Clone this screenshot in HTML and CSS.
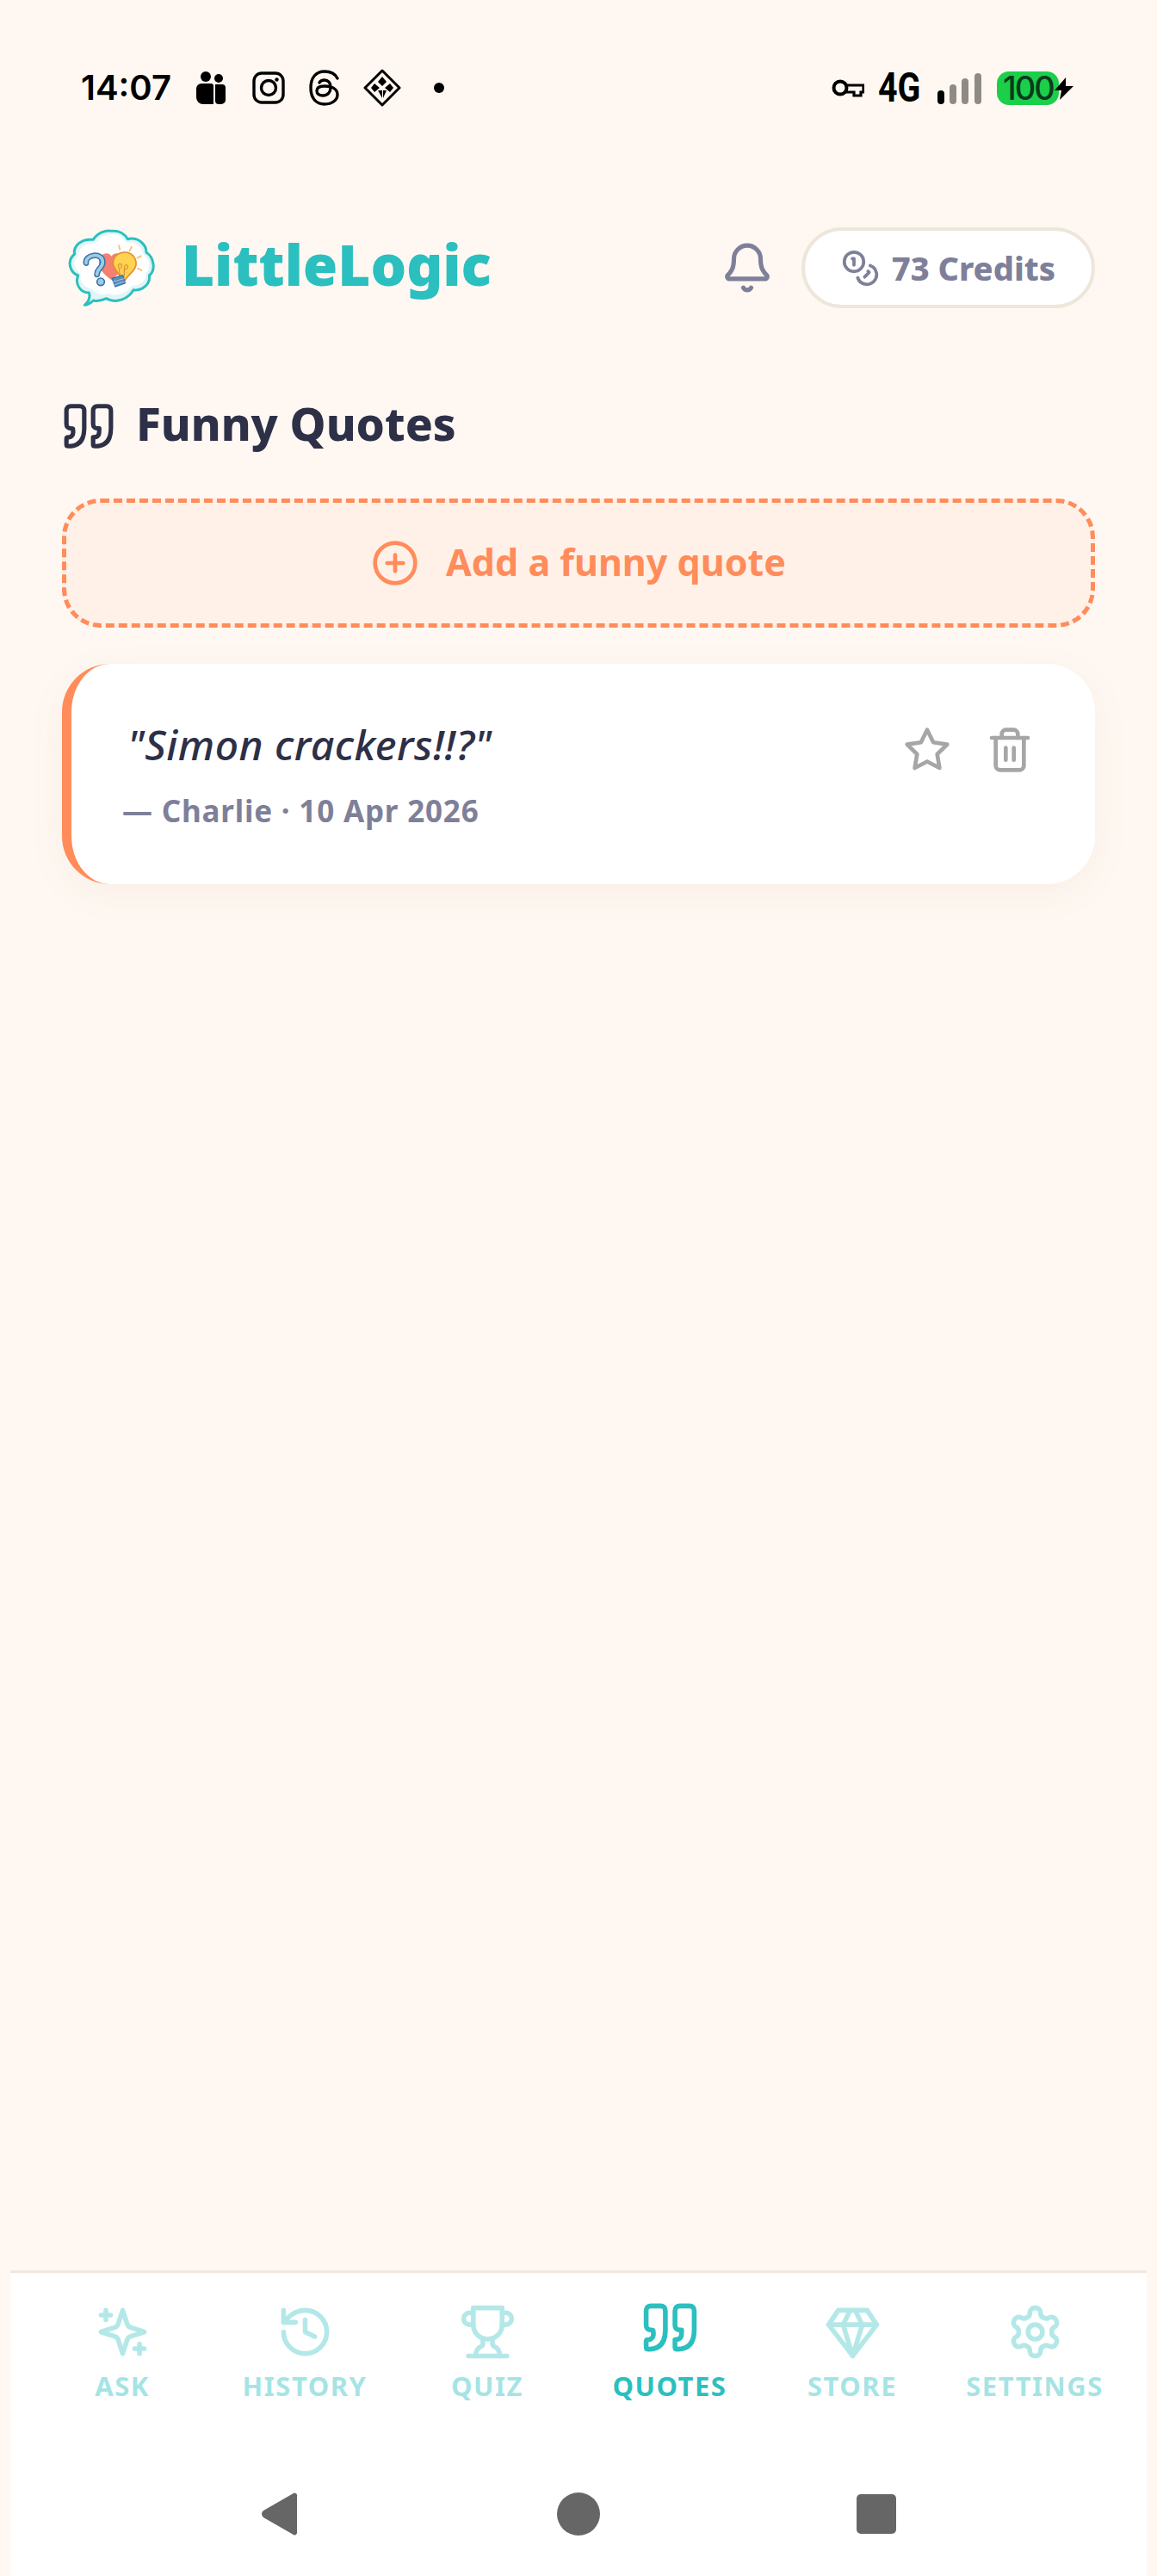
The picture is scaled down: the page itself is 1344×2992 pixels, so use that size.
FILE: index.html
```html
<!DOCTYPE html>
<html lang="en">
<head>
<meta charset="utf-8">
<title>LittleLogic</title>
<link rel="stylesheet" href="styles.css">
</head>
<body>
<div class="screen">
  <header class="status">
    <div class="status-left">
      <span class="time">14:07</span>
      <svg class="si si-people" viewBox="0 0 34 38"><circle cx="11" cy="6" r="6"/><circle cx="26" cy="8" r="5"/><path d="M6 14h11a3 3 0 0 1 3 3v21H8a8 8 0 0 1-8-8V20a6 6 0 0 1 6-6z"/><path d="M22 15h8a4 4 0 0 1 4 4v14a5 5 0 0 1-5 5h-3a4 4 0 0 1-4-4z"/></svg>
      <svg class="si si-insta" viewBox="0 0 38 38"><rect x="2" y="2" width="34" height="34" rx="9" fill="none" stroke="#000" stroke-width="3.4"/><circle cx="19" cy="19" r="8.5" fill="none" stroke="#000" stroke-width="3.4"/><circle cx="28.5" cy="9.5" r="2.2"/></svg>
      <svg class="si si-threads" viewBox="0 0 36 42"><path d="M33 10C30 4 25 2 18 2 8 2 2 9 2 21s6 19 16 19c9 0 15-5 15-11 0-7-7-10-15-10-6 0-9 2-9 5.500S12 30 16 30c6 0 9-4 9-10 0-5-3-8-7-8-3 0-5 1-6 3" fill="none" stroke="#000" stroke-width="3.400" stroke-linecap="round"/></svg>
      <svg class="si si-diamond" viewBox="0 0 44 44"><path d="M22 2 42 22 22 42 2 22Z" fill="none" stroke="#000" stroke-width="3" stroke-linejoin="round"/><path d="M22 9l5 6-5 5-5-5zM13 17l6 5-6 5-4-5zM31 17l4 5-4 5-6-5zM17 25h5v9zM27 25h-4v9z"/></svg>
      <span class="dot"></span>
    </div>
    <div class="status-right">
      <svg class="si si-key" viewBox="0 0 38 22"><circle cx="10" cy="11" r="7.500" fill="none" stroke="#000" stroke-width="4"/><path d="M17 8h20v8h-3v4h-8v-4h-9" fill="none" stroke="#000" stroke-width="3.200"/></svg>
      <span class="net">4G</span>
      <svg class="si si-signal" viewBox="0 0 52 36"><rect x="0" y="20" width="8" height="16" rx="4"/><rect class="bar-off" x="14" y="13" width="8" height="23" rx="4"/><rect class="bar-off" x="28" y="6" width="8" height="30" rx="4"/><rect class="bar-off" x="43" y="0" width="8" height="36" rx="4"/></svg>
      <span class="battery"><span class="battery-num">100</span><svg class="bolt" viewBox="0 0 26 28"><path d="M15 1 2 16h8l-2 11 16-16h-9z"/></svg></span>
    </div>
  </header>

  <main class="main">
    <div class="topbar">
      <div class="brand">
        <svg class="logo" viewBox="0 0 108 94">
          <g transform="translate(-2 -9) scale(.3333)">
            <path d="M85 298C100 285 105 270 100 255 70 255 50 225 62 195 35 185 20 145 50 120 45 95 70 65 115 70 130 45 160 35 180 40 205 38 225 50 235 68 270 60 300 85 300 115 325 130 335 175 310 195 315 225 285 250 255 245 240 275 195 295 160 275 140 285 125 285 115 282 105 292 95 298 85 298Z" fill="#E2F5F6" stroke="#2BBFBF" stroke-width="9" stroke-linejoin="round"/>
            <path d="M106 240C78 235 66 215 72 190 50 175 40 145 62 128 60 105 82 80 120 84 135 60 160 50 180 52 205 50 220 62 230 80 262 75 288 95 288 120 312 135 318 170 298 188 300 212 280 232 250 230 235 255 195 270 165 258 140 268 125 255 106 240Z" fill="#fff"/>
            <path d="M178 210C150 190 133 172 135 145 137 120 165 108 178 128 192 108 222 118 222 145 222 172 205 190 178 210Z" fill="#F4806F"/>
            <path d="M90 152C84 122 148 112 148 148 148 172 128 168 128 192" fill="none" stroke="#3B72A6" stroke-width="20" stroke-linecap="round"/>
            <path d="M90 152C84 122 148 112 148 148 148 172 128 168 128 192" fill="none" stroke="#9CCBE6" stroke-width="11" stroke-linecap="round"/>
            <circle cx="141" cy="217" r="13" fill="#9CCBE6" stroke="#3B72A6" stroke-width="5"/>
            <path d="M207 195C195 175 182 165 184 148 187 125 205 114 225 114 250 114 266 134 264 158 262 180 232 195 226 212Z" fill="#FFD24F" stroke="#DE8F33" stroke-width="5" stroke-linejoin="round"/>
            <path d="M208 192 204 165M222 202 224 165M204 165C196 155 214 150 214 160L212 172M224 165C224 155 240 155 234 170L220 178" fill="none" stroke="#DE8F33" stroke-width="3.500"/>
            <path d="M180 205 218 194 226 222 192 234Z" fill="#5A8DBA" stroke="#3B72A6" stroke-width="4" stroke-linejoin="round"/>
            <path d="M183 217 222 206M188 228 224 216" stroke="#9CCBE6" stroke-width="3"/>
            <path d="M204 90 208 104M249 95 241 110M282 127 268 134M284 177 270 170" stroke="#FDBB55" stroke-width="5" stroke-linecap="round"/>
          </g>
        </svg>
        <span class="brand-name">LittleLogic</span>
      </div>
      <div class="actions">
        <svg class="ic ic-bell" viewBox="0 0 24 24"><path d="M10.268 21a2 2 0 0 0 3.464 0"/><path d="M3.262 15.326A1 1 0 0 0 4 17h16a1 1 0 0 0 .74-1.673C19.41 13.956 18 12.499 18 8A6 6 0 0 0 6 8c0 4.499-1.411 5.956-2.738 7.326"/></svg>
        <div class="credits">
          <svg class="ic ic-coins" viewBox="0 0 24 24"><circle cx="8" cy="8" r="6"/><path d="M18.09 10.370A6 6 0 1 1 10.340 18"/><path d="M7 6h1v4"/><path d="m16.710 13.880.7.710-2.820 2.820"/></svg>
          <span>73 Credits</span>
        </div>
      </div>
    </div>

    <h1 class="title">
      <svg class="ic ic-title" viewBox="0 0 24 24"><path d="M3 21c3 0 7-1 7-8V5c0-1.250-.756-2.017-2-2H4c-1.250 0-2 .75-2 1.972V11c0 1.250.75 2 2 2 1 0 1 0 1 1v1c0 1-1 2-2 2s-1 .008-1 1.031V20c0 1 0 1 1 1z"/><path d="M15 21c3 0 7-1 7-8V5c0-1.250-.757-2.017-2-2h-4c-1.250 0-2 .75-2 1.972V11c0 1.250.75 2 2 2h.75c0 2.250.25 4-2.750 4v3c0 1 0 1 1 1z"/></svg>
      <span class="title-text">Funny Quotes</span>
    </h1>

    <button class="add" type="button">
      <svg class="ic ic-add" viewBox="0 0 24 24"><circle cx="12" cy="12" r="10"/><path d="M8 12h8"/><path d="M12 8v8"/></svg>
      <span class="add-text">Add a funny quote</span>
    </button>

    <article class="card">
      <div class="card-body">
        <p class="quote">"Simon crackers!!?"</p>
        <p class="meta">— Charlie · 10 Apr 2026</p>
      </div>
      <div class="card-actions">
        <svg class="ic ic-card" viewBox="0 0 24 24"><polygon points="12 2 15.090 8.260 22 9.270 17 14.140 18.180 21.020 12 17.770 5.820 21.020 7 14.140 2 9.270 8.910 8.260 12 2"/></svg>
        <svg class="ic ic-card" viewBox="0 0 24 24"><path d="M3 6h18"/><path d="M19 6v14c0 1-1 2-2 2H7c-1 0-2-1-2-2V6"/><path d="M8 6V4c0-1 1-2 2-2h4c1 0 2 1 2 2v2"/><path d="M10 11v6"/><path d="M14 11v6"/></svg>
      </div>
    </article>
  </main>

  <footer class="nav">
    <nav class="tabs">
      <div class="tab">
        <svg class="ic ic-tab" viewBox="0 0 24 24"><path d="m12 3-1.912 5.813a2 2 0 0 1-1.275 1.275L3 12l5.813 1.912a2 2 0 0 1 1.275 1.275L12 21l1.912-5.813a2 2 0 0 1 1.275-1.275L21 12l-5.813-1.912a2 2 0 0 1-1.275-1.275L12 3Z"/><path d="M5 3v4"/><path d="M19 17v4"/><path d="M3 5h4"/><path d="M17 19h4"/></svg>
        <span class="tab-label">ASK</span>
      </div>
      <div class="tab">
        <svg class="ic ic-tab" viewBox="0 0 24 24"><path d="M3 12a9 9 0 1 0 9-9 9.750 9.750 0 0 0-6.740 2.740L3 8"/><path d="M3 3v5h5"/><path d="M12 7v5l4 2"/></svg>
        <span class="tab-label">HISTORY</span>
      </div>
      <div class="tab">
        <svg class="ic ic-tab" viewBox="0 0 24 24"><path d="M6 9H4.500a2.500 2.500 0 0 1 0-5H6"/><path d="M18 9h1.500a2.500 2.500 0 0 0 0-5H18"/><path d="M4 22h16"/><path d="M10 14.660V17c0 .55-.47.98-.97 1.210C7.850 18.750 7 20.240 7 22"/><path d="M14 14.660V17c0 .55.47.98.97 1.210C16.150 18.750 17 20.240 17 22"/><path d="M18 2H6v7a6 6 0 0 0 12 0V2Z"/></svg>
        <span class="tab-label">QUIZ</span>
      </div>
      <div class="tab tab-active">
        <svg class="ic ic-tab" viewBox="0 0 24 24"><path d="M3 21c3 0 7-1 7-8V5c0-1.250-.756-2.017-2-2H4c-1.250 0-2 .75-2 1.972V11c0 1.250.75 2 2 2 1 0 1 0 1 1v1c0 1-1 2-2 2s-1 .008-1 1.031V20c0 1 0 1 1 1z"/><path d="M15 21c3 0 7-1 7-8V5c0-1.250-.757-2.017-2-2h-4c-1.250 0-2 .75-2 1.972V11c0 1.250.75 2 2 2h.75c0 2.250.25 4-2.750 4v3c0 1 0 1 1 1z"/></svg>
        <span class="tab-label">QUOTES</span>
      </div>
      <div class="tab">
        <svg class="ic ic-tab" viewBox="0 0 24 24"><path d="M6 3h12l4 6-10 13L2 9Z"/><path d="M11 3 8 9l4 13 4-13-3-6"/><path d="M2 9h20"/></svg>
        <span class="tab-label">STORE</span>
      </div>
      <div class="tab">
        <svg class="ic ic-tab" viewBox="0 0 24 24"><path d="M12.220 2h-.44a2 2 0 0 0-2 2v.18a2 2 0 0 1-1 1.730l-.43.25a2 2 0 0 1-2 0l-.15-.08a2 2 0 0 0-2.730.73l-.22.38a2 2 0 0 0 .73 2.730l.15.1a2 2 0 0 1 1 1.720v.51a2 2 0 0 1-1 1.740l-.15.09a2 2 0 0 0-.73 2.730l.22.38a2 2 0 0 0 2.730.73l.15-.08a2 2 0 0 1 2 0l.43.25a2 2 0 0 1 1 1.730V20a2 2 0 0 0 2 2h.44a2 2 0 0 0 2-2v-.18a2 2 0 0 1 1-1.730l.43-.25a2 2 0 0 1 2 0l.15.08a2 2 0 0 0 2.730-.73l.22-.39a2 2 0 0 0-.73-2.730l-.15-.08a2 2 0 0 1-1-1.740v-.5a2 2 0 0 1 1-1.740l.15-.09a2 2 0 0 0 .73-2.730l-.22-.38a2 2 0 0 0-2.730-.73l-.15.08a2 2 0 0 1-2 0l-.43-.25a2 2 0 0 1-1-1.730V4a2 2 0 0 0-2-2z"/><circle cx="12" cy="12" r="3"/></svg>
        <span class="tab-label">SETTINGS</span>
      </div>
    </nav>
    <div class="android">
      <svg class="sys" viewBox="0 0 50 50"><path d="M8 21 42 1.500a3 3 0 0 1 5 3v41a3 3 0 0 1-5 3L8 29a5 5 0 0 1 0-8z" transform="translate(-3 0)"/></svg>
      <svg class="sys" viewBox="0 0 50 50"><circle cx="25" cy="25" r="25"/></svg>
      <svg class="sys" viewBox="0 0 50 50"><rect x="2" y="2" width="46" height="46" rx="5"/></svg>
    </div>
  </footer>
</div>
</body>
</html>
```

FILE: styles.css
```css
* { box-sizing: border-box; }
html, body { margin: 0; padding: 0; }
body { background: #FFF8F2; font-family: "Noto Sans", "Lato", sans-serif; color: #2D3047; }
.screen { min-height: 2992px; height: 2992px; display: flex; flex-direction: column; overflow: hidden; }

/* status bar */
.status { display: flex; justify-content: space-between; align-items: center; height: 44px; margin-top: 80px; padding: 0 94px; color: #000; }
.status-left, .status-right { display: flex; align-items: center; }
.time { font-family: "Inter", sans-serif; font-weight: 600; font-size: 40px; line-height: 44px; width: 134px; }
.si { display: block; fill: #000; flex: none; }
.si-people { width: 34px; height: 38px; margin-right: 31px; }
.si-insta { width: 38px; height: 38px; margin-right: 28px; }
.si-threads { width: 36px; height: 42px; margin-right: 27px; }
.si-diamond { width: 44px; height: 44px; margin-right: 38px; }
.dot { width: 12px; height: 12px; border-radius: 50%; background: #000; }
.si-key { width: 38px; height: 22px; margin-right: 16px; }
.net { font-family: "Roboto", sans-serif; font-weight: 700; font-size: 48px; line-height: 44px; width: 69px; transform: scaleX(.82); transform-origin: left center; }
.si-signal { width: 52px; height: 36px; margin-right: 17px; margin-top: 2px; }
.bar-off { fill: #8F8B84; }
.battery { display: flex; align-items: center; width: 92px; height: 39px; position: relative; }
.battery-num { display: block; width: 72px; height: 39px; padding-left: 7px; border-radius: 14px; background: #1CCF4A; font-family: "Inter", sans-serif; font-weight: 500; font-size: 38px; line-height: 39px; letter-spacing: -2px; color: #0B3A1C; }
.bolt { position: absolute; left: 65px; top: 6px; width: 26px; height: 28px; fill: #000; }

/* main */
.main { flex: 1; padding: 0 72px; display: flex; flex-direction: column; }
.ic { display: block; flex: none; fill: none; stroke: currentColor; stroke-width: 2; stroke-linecap: round; stroke-linejoin: round; }
.topbar { display: flex; justify-content: space-between; align-items: center; height: 94px; margin-top: 140px; }
.brand { display: flex; align-items: center; }
.logo { display: block; width: 108px; height: 94px; margin-right: 31px; }
.brand-name { font-weight: 900; font-size: 65.500px; line-height: 86px; padding-bottom: 8px; color: #2BBFBF; }
.actions { display: flex; align-items: center; gap: 32px; }
.ic-bell { width: 62px; height: 62px; color: #7E8099; }
.credits { display: flex; align-items: center; gap: 14px; height: 94px; padding: 0 42px; border: 4px solid #EDE6DA; border-radius: 47px; background: #fff; color: #7E8099; font-weight: 800; font-size: 38px; }
.ic-coins { width: 45px; height: 45px; }
.title { display: flex; align-items: center; gap: 24px; height: 62px; margin: 106px 0 0; font-weight: 800; font-size: 53px; color: #2D3047; }
.title-text { padding-bottom: 8px; }
.ic-title { width: 62px; height: 62px; }
.add { display: flex; align-items: center; justify-content: center; gap: 31px; height: 150px; margin-top: 53px; border: 5.600px dashed #FF8C5A; border-radius: 45px; background: #FFF1E8; color: #FF8C5A; font-family: inherit; font-weight: 700; font-size: 43px; }
.add-text { padding-bottom: 4px; }
.ic-add { width: 56px; height: 56px; }
.card { display: flex; justify-content: space-between; height: 256px; margin-top: 42px; padding: 60px 71px 0 62px; border-left: 11px solid #FF8C5A; border-radius: 56px; background: #fff; box-shadow: 0 11px 45px rgba(120, 80, 50, .06); }
.card-body { display: flex; flex-direction: column; }
.quote { margin: 0; padding-left: 3px; font-style: italic; font-weight: 500; font-size: 48px; line-height: 68px; letter-spacing: .5px; color: #2D3047; }
.meta { margin: 20px 0 0 -3px; font-weight: 700; font-size: 35px; line-height: 46px; letter-spacing: .8px; color: #7E8099; }
.card-actions { display: flex; gap: 40px; margin-top: 12px; color: #A6A6A6; }
.ic-card { width: 56px; height: 56px; }

/* bottom */
.nav { display: flex; flex-direction: column; height: 355px; margin: 0 12px; border-top: 3px solid #F0E8DE; background: #fff; }
.tabs { display: flex; padding: 35px 24px 0; }
.tab { flex: 1 1 0; min-width: 0; display: flex; flex-direction: column; align-items: center; color: #2BBFBF; }
.ic-tab { width: 67px; height: 67px; opacity: .35; }
.tab-label { margin-top: 9px; font-weight: 700; font-size: 31px; line-height: 40px; letter-spacing: 1.500px; opacity: .42; }
.tab-active .ic-tab { opacity: 1; transform: translateY(-5px); }
.tab-active .tab-label { opacity: 1; }
.android { display: flex; justify-content: center; gap: 296px; margin-top: auto; padding-bottom: 47px; }
.sys { display: block; width: 50px; height: 50px; fill: #666; }
```
